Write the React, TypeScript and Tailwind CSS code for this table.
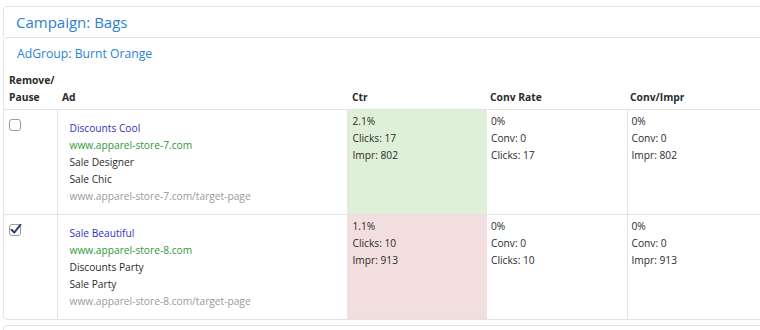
const rows = [
  {
    checked: false,
    title: "Discounts Cool",
    url: "www.apparel-store-7.com",
    line1: "Sale Designer",
    line2: "Sale Chic",
    target: "www.apparel-store-7.com/target-page",
    ctr: "2.1%",
    clicks: 17,
    impr: 802,
    tone: "bg-[#dff0d8]",
  },
  {
    checked: true,
    title: "Sale Beautiful",
    url: "www.apparel-store-8.com",
    line1: "Discounts Party",
    line2: "Sale Party",
    target: "www.apparel-store-8.com/target-page",
    ctr: "1.1%",
    clicks: 10,
    impr: 913,
    tone: "bg-[#f2dede]",
  },
];

function Box({ checked }: { checked: boolean }) {
  return (
    <svg width="13" height="13" viewBox="0 0 13 13" className="block">
      <rect x="0.5" y="0.5" width="11" height="11" rx="2.5" fill="#fff" stroke="#9a9a9a" />
      {checked && (
        <path d="M2.6 5.8 L5.2 8.6 L11.4 0.8" fill="none" stroke="#2c3f7a" strokeWidth="2" strokeLinecap="round" strokeLinejoin="round" />
      )}
    </svg>
  );
}

export default function App() {
  return (
    <div className="w-[760px] h-[330px] overflow-hidden bg-white text-[10.2px] leading-[17px] text-[#2b2b2b]" style={{ fontFamily: '"Open Sans", "Noto Sans", sans-serif' }}>
      <div className="w-[800px] ml-[3px] mt-[6px]">
        <div className="h-[31px] border border-b-0 border-[#e3e3e3] rounded-t-[4px] flex items-center pl-[12px] text-[15px] text-[#2a83cf]">
          Campaign: Bags
        </div>
        <div className="border border-[#e3e3e3] rounded-[4px]">
          <div className="h-[30px] flex items-center pl-[13px] text-[12.2px] text-[#2a83cf]">AdGroup: Burnt Orange</div>
          <table className="border-collapse table-fixed w-[763px]">
            <colgroup>
              <col className="w-[53px]" />
              <col className="w-[290px]" />
              <col className="w-[140px]" />
              <col className="w-[140px]" />
              <col className="w-[140px]" />
            </colgroup>
            <thead>
              <tr className="text-left align-bottom border-b border-[#e3e3e3] text-[10.3px]">
                <th className="px-[5px] pt-[4px] pb-[3px] font-bold">Remove/<br />Pause</th>
                <th className="px-[5px] pb-[3px] font-bold">Ad</th>
                <th className="px-[5px] pb-[3px] font-bold">Ctr</th>
                <th className="px-[3px] pb-[3px] font-bold">Conv Rate</th>
                <th className="px-[3px] pb-[3px] font-bold">Conv/Impr</th>
              </tr>
            </thead>
            <tbody>
              {rows.map((r, i) => (
                <tr key={i} className={`align-top ${i === 0 ? "border-b border-[#e3e3e3]" : ""}`}>
                  <td className="px-[5px] pt-[9px] border-r border-[#e3e3e3]">
                    <Box checked={r.checked} />
                  </td>
                  <td className="pl-[12px] pt-[10px] pb-[9px] border-r border-[#e3e3e3]">
                    <div className="text-[#3030c0]">{r.title}</div>
                    <div className="text-[#2c9a3a]">{r.url}</div>
                    <div>{r.line1}</div>
                    <div>{r.line2}</div>
                    <div className="text-[#9a9a9a]">{r.target}</div>
                  </td>
                  <td className={`px-[5px] pt-[3px] ${r.tone}`}>
                    <div>{r.ctr}</div>
                    <div>Clicks: {r.clicks}</div>
                    <div>Impr: {r.impr}</div>
                  </td>
                  <td className="px-[4px] pt-[3px] border-r border-[#e3e3e3]">
                    <div>0%</div>
                    <div>Conv: 0</div>
                    <div>Clicks: {r.clicks}</div>
                  </td>
                  <td className="px-[4px] pt-[3px]">
                    <div>0%</div>
                    <div>Conv: 0</div>
                    <div>Impr: {r.impr}</div>
                  </td>
                </tr>
              ))}
            </tbody>
          </table>
        </div>
        <div className="mt-[5px] h-[10px] border-t border-x border-[#e3e3e3] rounded-t-[4px]" />
      </div>
    </div>
  );
}
